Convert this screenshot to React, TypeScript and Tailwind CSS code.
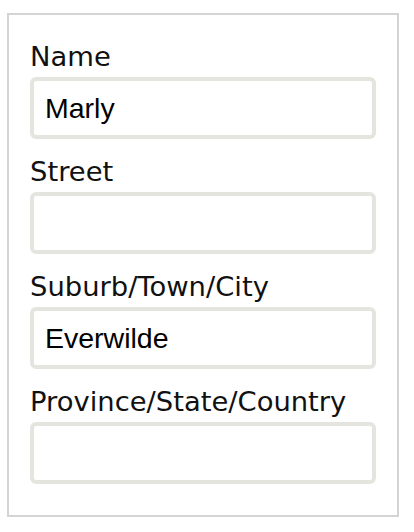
import React from "react";

const fields = [
  { label: "Name", value: "Marly" },
  { label: "Street", value: "" },
  { label: "Suburb/Town/City", value: "Everwilde" },
  { label: "Province/State/Country", value: "" },
];

export default function App() {
  return (
    <div className="w-[414px] h-[532px] bg-white pt-[13px] pl-[7px]">
      <div className="w-[392px] h-[504px] border-2 border-[#d4d4d4] pt-[26px] px-[21px] flex flex-col gap-[17px]">
        {fields.map((f) => (
          <div key={f.label} className="flex flex-col gap-[4px]">
            <div className="text-[27.4px] leading-[32px] text-[#111] font-['DejaVu_Sans',sans-serif]">
              {f.label}
            </div>
            <div className="h-[62px] w-[346px] border-4 border-[#e5e5e0] rounded-[6px] bg-white pl-[11px] flex items-center">
              <span className="text-[28.5px] leading-none text-black font-['Liberation_Sans',Arial,sans-serif]">
                {f.value}
              </span>
            </div>
          </div>
        ))}
      </div>
    </div>
  );
}
